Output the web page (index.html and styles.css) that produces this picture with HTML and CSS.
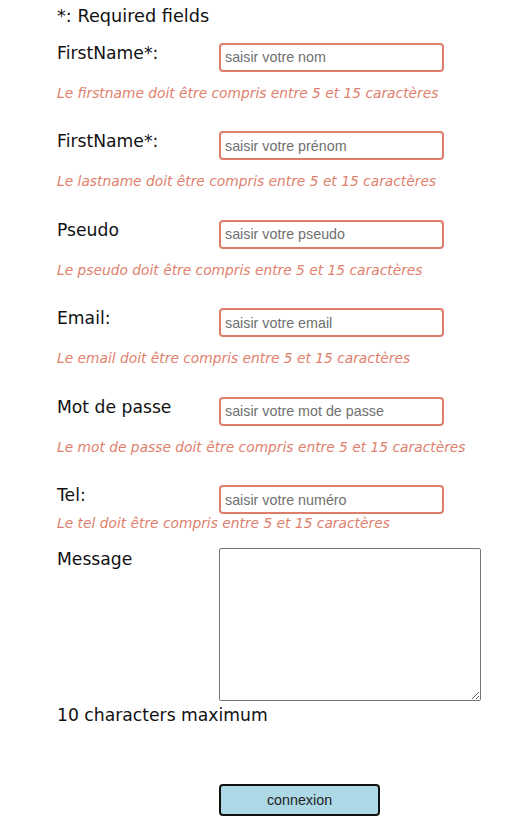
FILE: index.html
```html
<!DOCTYPE html>
<html lang="fr">
<head>
<meta charset="utf-8">
<title>Formulaire</title>
<link rel="stylesheet" href="styles.css">
</head>
<body>
<form class="form">
  <p class="required">*: Required fields</p>

  <div class="field">
    <div class="row">
      <label class="label" for="fn">FirstName*:</label>
      <input class="input" id="fn" type="text" placeholder="saisir votre nom">
    </div>
    <p class="error">Le firstname doit être compris entre 5 et 15 caractères</p>
  </div>

  <div class="field">
    <div class="row">
      <label class="label" for="ln">FirstName*:</label>
      <input class="input" id="ln" type="text" placeholder="saisir votre prénom">
    </div>
    <p class="error">Le lastname doit être compris entre 5 et 15 caractères</p>
  </div>

  <div class="field">
    <div class="row">
      <label class="label" for="ps">Pseudo</label>
      <input class="input" id="ps" type="text" placeholder="saisir votre pseudo">
    </div>
    <p class="error">Le pseudo doit être compris entre 5 et 15 caractères</p>
  </div>

  <div class="field">
    <div class="row">
      <label class="label" for="em">Email:</label>
      <input class="input" id="em" type="text" placeholder="saisir votre email">
    </div>
    <p class="error">Le email doit être compris entre 5 et 15 caractères</p>
  </div>

  <div class="field">
    <div class="row">
      <label class="label" for="pw">Mot de passe</label>
      <input class="input" id="pw" type="text" placeholder="saisir votre mot de passe">
    </div>
    <p class="error">Le mot de passe doit être compris entre 5 et 15 caractères</p>
  </div>

  <div class="field field-tight">
    <div class="row">
      <label class="label" for="tel">Tel:</label>
      <input class="input" id="tel" type="text" placeholder="saisir votre numéro">
    </div>
    <p class="error error-tight">Le tel doit être compris entre 5 et 15 caractères</p>
  </div>

  <div class="row message-row">
    <label class="label" for="msg">Message</label>
    <textarea class="textarea" id="msg"></textarea>
  </div>
  <p class="hint">10 characters maximum</p>

  <div class="actions">
    <button class="button" type="button">connexion</button>
  </div>
</form>
</body>
</html>
```

FILE: styles.css
```css
* {
  box-sizing: border-box;
}

html, body {
  margin: 0;
  padding: 0;
  background: #ffffff;
}

body {
  font-family: "DejaVu Sans", Verdana, sans-serif;
  color: #111111;
}

.form {
  padding: 6px 0 0 57px;
  display: flex;
  flex-direction: column;
}

.required {
  margin: 0 0 16.5px 0;
  font-size: 17.7px;
  line-height: 20px;
}

.field {
  display: flex;
  flex-direction: column;
  margin-bottom: 30.6px;
}

.field-tight {
  margin-bottom: 17px;
}

.row {
  display: grid;
  grid-template-columns: 162px auto;
  align-items: start;
}

.label {
  font-size: 17.2px;
  line-height: 20px;
}

.input {
  width: 225px;
  height: 29px;
  margin: 0;
  padding: 0 4px;
  border: 2px solid #dd7e6b;
  border-radius: 4px;
  font-family: "Liberation Sans", Arial, sans-serif;
  font-size: 14.3px;
  color: #333;
  outline: none;
  background: #fff;
}

.input::placeholder {
  color: #707070;
}

.error {
  margin: 13px 0 0 0;
  font-size: 13.8px;
  line-height: 16px;
  font-style: italic;
  color: #e07f6d;
}

.error-tight {
  margin-top: 1px;
}

.message-row .label {
  padding-top: 1px;
}

.textarea {
  width: 262px;
  height: 153px;
  margin: 0;
  border: 1px solid #767676;
  border-radius: 2px;
  resize: both;
  font-family: "Liberation Mono", monospace;
  font-size: 13px;
}

.hint {
  margin: 4px 0 0 0;
  font-size: 17.2px;
  line-height: 20px;
}

.actions {
  padding: 59px 0 0 162px;
}

.button {
  width: 161px;
  height: 32px;
  background: #add8e6;
  border: 2px solid #111111;
  border-radius: 4px;
  font-family: "Liberation Sans", Arial, sans-serif;
  font-size: 14.3px;
  color: #222;
  cursor: pointer;
}
```
